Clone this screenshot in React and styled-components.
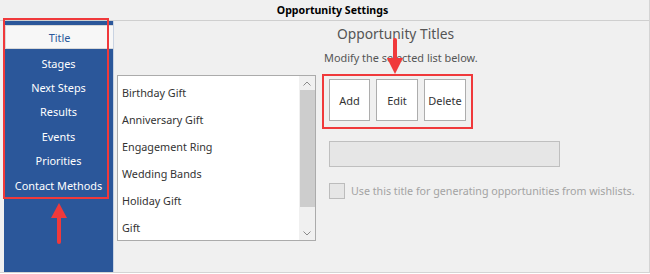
import React from "react";
import styled, { createGlobalStyle } from "styled-components";

const Global = createGlobalStyle`
  html, body { margin: 0; padding: 0; background: #ffffff; }
  body { font-family: "Noto Sans", "Open Sans", sans-serif; }
  * { box-sizing: border-box; }
`;

const FONT = `"Noto Sans", "Open Sans", sans-serif`;
const BLUE = "#2b579a";
const RED = "#f0393b";

const Page = styled.div`
  position: relative;
  width: 650px;
  height: 273px;
  background: #f0f0f0;
  border-right: 1px solid #d4d4d4;
  border-bottom: 1px solid #d4d4d4;
  display: flex;
  flex-direction: column;
  font-family: ${FONT};
  overflow: hidden;
  white-space: nowrap;
`;

const Header = styled.div`
  height: 21px;
  flex: none;
  border-bottom: 1px solid #cfcfcf;
  display: flex;
  align-items: center;
  justify-content: center;
  padding-left: 16px;
  font-size: 10.6px;
  font-weight: 700;
  color: #000;
`;

const Main = styled.div`
  flex: 1;
  display: flex;
  min-height: 0;
`;

const Sidebar = styled.nav`
  position: relative;
  flex: none;
  margin-left: 4px;
  width: 110px;
  background: ${BLUE};
  border-right: 1px solid #c9d3e2;
  padding-top: 4px;
  display: flex;
  flex-direction: column;
`;

const NavItem = styled.div`
  height: ${(p) => (p.$active ? "24px" : "24.4px")};
  margin: ${(p) => (p.$active ? "0 0 2px 1px" : "0")};
  display: flex;
  align-items: center;
  justify-content: center;
  font-size: 10.9px;
  color: ${(p) => (p.$active ? BLUE : "#ffffff")};
  background: ${(p) => (p.$active ? "#f7f7f7" : "transparent")};
  border: ${(p) => (p.$active ? "1px solid #d8d8d8" : "none")};
  border-right: none;
`;

const Highlight = styled.div`
  position: absolute;
  left: -1px;
  top: -3px;
  width: 106px;
  height: 181px;
  border: 2px solid ${RED};
  pointer-events: none;
`;

const ArrowSvg = styled.svg`
  position: absolute;
  left: ${(p) => p.$x}px;
  top: ${(p) => p.$y}px;
  overflow: visible;
`;

const ListBox = styled.div`
  margin: 54px 0 0 3px;
  width: 199px;
  height: 166px;
  background: #ffffff;
  border: 1px solid #ababab;
  display: flex;
  flex: none;
`;

const ListItems = styled.div`
  flex: 1;
  padding-top: 2.5px;
`;

const ListItem = styled.div`
  height: 27px;
  display: flex;
  align-items: center;
  padding-left: 4px;
  font-size: 10.8px;
  color: #333;
`;

const ScrollBar = styled.div`
  width: 16px;
  background: #f0f0f0;
  display: flex;
  flex-direction: column;
  align-items: center;
`;

const ScrollBtn = styled.div`
  height: 14px;
  width: 16px;
  display: flex;
  align-items: center;
  justify-content: center;
`;

const Thumb = styled.div`
  width: 15px;
  height: 117px;
  background: #cdcdcd;
`;

const Spacer = styled.div`
  flex: 1;
`;

const Right = styled.div`
  position: relative;
  flex: 1;
  min-width: 0;
  padding-left: 6px;
  display: flex;
  flex-direction: column;
  align-items: flex-start;
`;

const PanelTitle = styled.div`
  margin: 4px 0 0 15px;
  font-size: 13.8px;
  line-height: 18px;
  color: #555;
`;

const PanelHint = styled.div`
  margin: 7px 0 0 2px;
  font-size: 10.9px;
  line-height: 16px;
  color: #555;
`;

const ButtonGroup = styled.div`
  margin-top: 8px;
  border: 2px solid ${RED};
  padding: 3px 5px 6px 5px;
  display: flex;
  gap: 6px;
`;

const Button = styled.div`
  width: ${(p) => p.$w}px;
  height: 42px;
  background: #ffffff;
  border: 1px solid #adadad;
  display: flex;
  align-items: center;
  justify-content: center;
  font-size: 11px;
  color: #333;
`;

const TextField = styled.div`
  margin: 12px 0 0 7px;
  width: 231px;
  height: 26px;
  background: #e6e6e6;
  border: 1px solid #bfbfbf;
`;

const CheckRow = styled.div`
  margin: 16px 0 0 7px;
  display: flex;
  align-items: center;
  gap: 6px;
`;

const CheckBox = styled.div`
  width: 16px;
  height: 16px;
  background: #e6e6e6;
  border: 1px solid #bcbcbc;
`;

const CheckLabel = styled.span`
  font-size: 10.7px;
  color: #a3a3a3;
`;

function UpArrow({ x, y }) {
  return (
    <ArrowSvg $x={x} $y={y} width="16" height="41" viewBox="0 0 16 41">
      <polygon points="8,0 16,15 0,15" fill={RED} />
      <line x1="8" y1="14" x2="8" y2="39" stroke={RED} strokeWidth="4" strokeLinecap="round" />
    </ArrowSvg>
  );
}

function DownArrow({ x, y }) {
  return (
    <ArrowSvg $x={x} $y={y} width="16" height="37" viewBox="0 0 16 37">
      <line x1="8" y1="2" x2="8" y2="22" stroke={RED} strokeWidth="4" strokeLinecap="round" />
      <polygon points="0,20 16,20 8,36" fill={RED} />
    </ArrowSvg>
  );
}

const navItems = ["Title", "Stages", "Next Steps", "Results", "Events", "Priorities", "Contact Methods"];
const titles = ["Birthday Gift", "Anniversary Gift", "Engagement Ring", "Wedding Bands", "Holiday Gift", "Gift"];

export default function App() {
  return (
    <>
      <Global />
      <Page>
        <Header>Opportunity Settings</Header>
        <Main>
          <Sidebar>
            {navItems.map((n, i) => (
              <NavItem key={n} $active={i === 0}>
                {n}
              </NavItem>
            ))}
            <Highlight />
            <UpArrow x={47} y={182} />
          </Sidebar>
          <ListBox>
            <ListItems>
              {titles.map((t) => (
                <ListItem key={t}>{t}</ListItem>
              ))}
            </ListItems>
            <ScrollBar>
              <ScrollBtn>
                <svg width="8" height="5" viewBox="0 0 8 5">
                  <polyline points="0.5,4.5 4,1 7.5,4.5" fill="none" stroke="#8a8a8a" strokeWidth="1" />
                </svg>
              </ScrollBtn>
              <Thumb />
              <Spacer />
              <ScrollBtn>
                <svg width="8" height="5" viewBox="0 0 8 5">
                  <polyline points="0.5,0.5 4,4 7.5,0.5" fill="none" stroke="#8a8a8a" strokeWidth="1" />
                </svg>
              </ScrollBtn>
            </ScrollBar>
          </ListBox>
          <Right>
            <PanelTitle>Opportunity Titles</PanelTitle>
            <PanelHint>Modify the selected list below.</PanelHint>
            <ButtonGroup>
              <Button $w={41}>Add</Button>
              <Button $w={42}>Edit</Button>
              <Button $w={42}>Delete</Button>
            </ButtonGroup>
            <TextField />
            <CheckRow>
              <CheckBox />
              <CheckLabel>Use this title for generating opportunities from wishlists.</CheckLabel>
            </CheckRow>
            <DownArrow x={71} y={17} />
          </Right>
        </Main>
      </Page>
    </>
  );
}
